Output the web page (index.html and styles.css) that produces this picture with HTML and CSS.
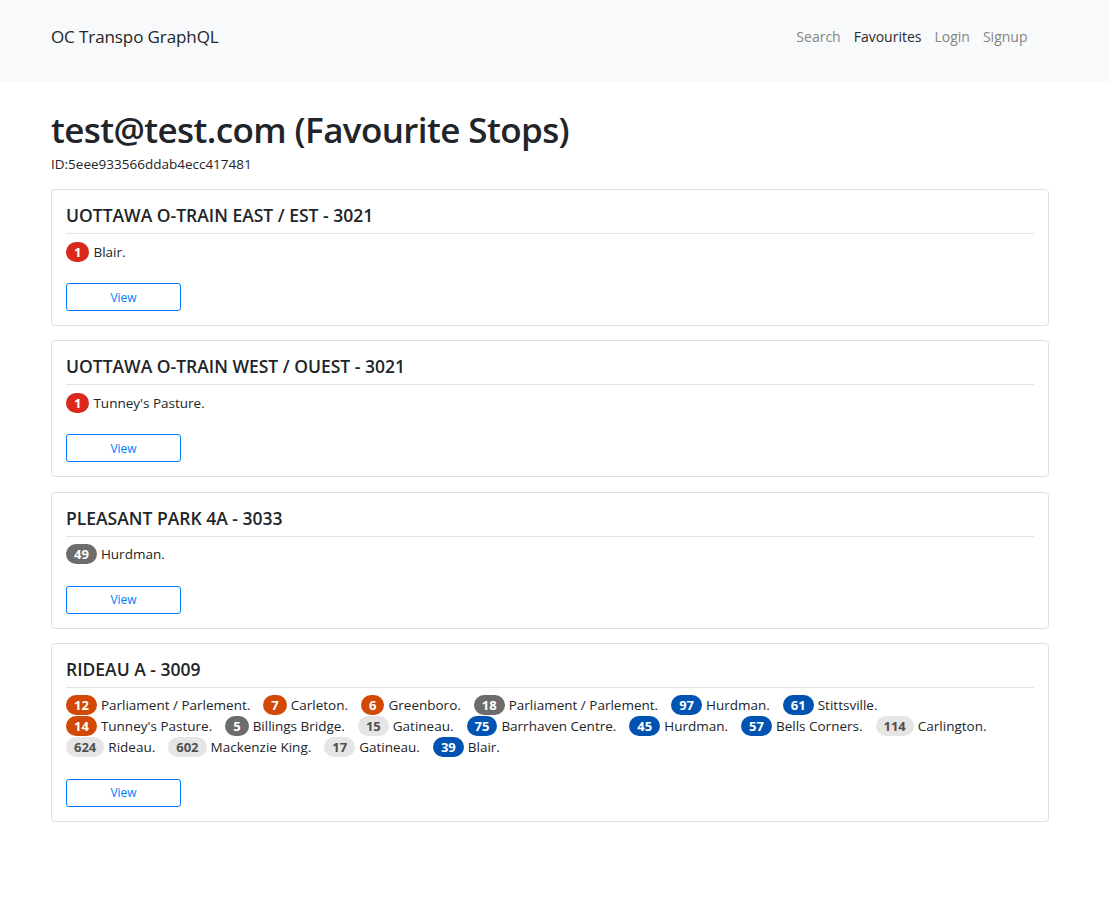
FILE: index.html
```html
<!DOCTYPE html>
<html lang="en">
<head>
<meta charset="utf-8">
<title>OC Transpo GraphQL</title>
<link rel="stylesheet" href="styles.css">
</head>
<body>
<nav class="navbar">
  <a class="brand" href="#">OC Transpo GraphQL</a>
  <ul class="nav">
    <li><a class="nav-link" href="#">Search</a></li>
    <li><a class="nav-link active" href="#">Favourites</a></li>
    <li><a class="nav-link" href="#">Login</a></li>
    <li><a class="nav-link" href="#">Signup</a></li>
  </ul>
</nav>
<main class="container">
  <h1 class="title">test@test.com (Favourite Stops)</h1>
  <p class="user-id">ID:5eee933566ddab4ecc417481</p>

  <section class="card">
    <h2 class="card-title">UOTTAWA O-TRAIN EAST / EST - 3021</h2>
    <hr class="divider">
    <div class="routes">
      <span class="route"><span class="badge red">1</span><span class="dest">Blair.</span></span>
    </div>
    <button class="btn-view">View</button>
  </section>

  <section class="card">
    <h2 class="card-title">UOTTAWA O-TRAIN WEST / OUEST - 3021</h2>
    <hr class="divider">
    <div class="routes">
      <span class="route"><span class="badge red">1</span><span class="dest">Tunney's Pasture.</span></span>
    </div>
    <button class="btn-view">View</button>
  </section>

  <section class="card">
    <h2 class="card-title">PLEASANT PARK 4A - 3033</h2>
    <hr class="divider">
    <div class="routes">
      <span class="route"><span class="badge gray">49</span><span class="dest">Hurdman.</span></span>
    </div>
    <button class="btn-view">View</button>
  </section>

  <section class="card">
    <h2 class="card-title">RIDEAU A - 3009</h2>
    <hr class="divider">
    <div class="routes">
      <span class="route"><span class="badge orange">12</span><span class="dest">Parliament / Parlement.</span></span>
      <span class="route"><span class="badge orange">7</span><span class="dest">Carleton.</span></span>
      <span class="route"><span class="badge orange">6</span><span class="dest">Greenboro.</span></span>
      <span class="route"><span class="badge gray">18</span><span class="dest">Parliament / Parlement.</span></span>
      <span class="route"><span class="badge blue">97</span><span class="dest">Hurdman.</span></span>
      <span class="route"><span class="badge blue">61</span><span class="dest">Stittsville.</span></span>
      <span class="route"><span class="badge orange">14</span><span class="dest">Tunney's Pasture.</span></span>
      <span class="route"><span class="badge gray">5</span><span class="dest">Billings Bridge.</span></span>
      <span class="route"><span class="badge light">15</span><span class="dest">Gatineau.</span></span>
      <span class="route"><span class="badge blue">75</span><span class="dest">Barrhaven Centre.</span></span>
      <span class="route"><span class="badge blue">45</span><span class="dest">Hurdman.</span></span>
      <span class="route"><span class="badge blue">57</span><span class="dest">Bells Corners.</span></span>
      <span class="route"><span class="badge light">114</span><span class="dest">Carlington.</span></span>
      <span class="route"><span class="badge light">624</span><span class="dest">Rideau.</span></span>
      <span class="route"><span class="badge light">602</span><span class="dest">Mackenzie King.</span></span>
      <span class="route"><span class="badge light">17</span><span class="dest">Gatineau.</span></span>
      <span class="route"><span class="badge blue">39</span><span class="dest">Blair.</span></span>
    </div>
    <button class="btn-view">View</button>
  </section>
</main>
</body>
</html>
```

FILE: styles.css
```css
* { box-sizing: border-box; }

body {
  margin: 0;
  font-family: "Open Sans", "Noto Sans", sans-serif;
  color: #212529;
  background: #fff;
}

.navbar {
  height: 82px;
  background: #f8f9fa;
  display: flex;
  align-items: center;
  justify-content: space-between;
  padding: 0 75px 10px 51px;
}

.brand {
  font-size: 17px;
  color: #212529;
  text-decoration: none;
  letter-spacing: -0.1px;
}

.nav {
  list-style: none;
  margin: 0;
  padding: 0;
  display: flex;
}

.nav-link {
  display: block;
  padding: 0 6.5px;
  font-size: 14px;
  color: #848587;
  text-decoration: none;
}

.nav-link.active { color: #2b2b2b; }

.container {
  width: 998px;
  margin-left: 51px;
  padding-top: 24px;
}

.title {
  margin: 0;
  font-size: 35px;
  font-weight: 600;
  line-height: 48px;
  letter-spacing: -0.6px;
}

.user-id {
  margin: 0 0 14px;
  font-size: 13.5px;
  line-height: 21px;
}

.card {
  border: 1px solid #dfdfdf;
  border-radius: 4px;
  padding: 14px 14px 14px;
  margin-bottom: 14.3px;
}

.card-title {
  margin: 0 0 7px;
  font-size: 17.5px;
  font-weight: 600;
  line-height: 22px;
}

.divider {
  margin: 0 0 7px;
  border: 0;
  border-top: 1px solid #e5e5e5;
}

.routes {
  display: flex;
  flex-wrap: wrap;
  column-gap: 13px;
  margin-bottom: 21px;
}

.route {
  display: flex;
  align-items: center;
  height: 21px;
  font-size: 13.5px;
}

.dest { margin-left: 4px; }

.badge {
  display: inline-block;
  height: 20px;
  line-height: 20px;
  padding: 0 8px;
  border-radius: 10px;
  font-size: 13px;
  font-weight: 700;
  color: #fff;
  text-align: center;
}

.badge.red { background: #da291c; }
.badge.orange { background: #d14905; }
.badge.gray { background: #6c6c6c; }
.badge.blue { background: #0053b1; }
.badge.light { background: #e5e5e5; color: #505050; }

.btn-view {
  display: block;
  width: 115px;
  height: 28px;
  padding: 0;
  background: #fff;
  border: 1px solid #007bff;
  border-radius: 3px;
  color: #007bff;
  font-family: inherit;
  font-size: 12px;
  cursor: pointer;
}
```
